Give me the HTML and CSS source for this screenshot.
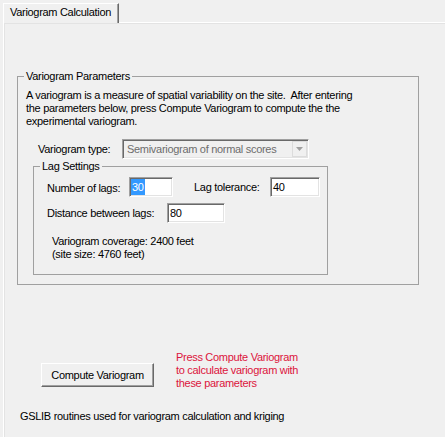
FILE: index.html
```html
<!DOCTYPE html>
<html>
<head>
<meta charset="utf-8">
<link rel="stylesheet" href="styles.css">
</head>
<body>
<div class="tabstrip"><div class="tab">Variogram Calculation</div></div>
<div class="page">
  <fieldset class="group main">
    <legend class="main-legend">Variogram Parameters</legend>
    <p class="desc">A variogram is a measure of spatial variability on the site.&nbsp; After entering<br>the parameters below, press Compute Variogram to compute the the<br>experimental variogram.</p>
    <div class="type-row">
      <span class="type-label">Variogram type:</span>
      <div class="combo">
        <span class="combo-text">Semivariogram of normal scores</span>
        <span class="combo-btn"><svg width="7" height="4" viewBox="0 0 7 4"><path d="M0 0H7L3.5 4Z" fill="#a0a0a0"/></svg></span>
      </div>
    </div>
    <fieldset class="group lag">
      <legend class="lag-legend">Lag Settings</legend>
      <div class="lag-row">
        <span class="l-num">Number of lags:</span>
        <div class="tb tb-num"><span class="sel">30</span></div>
        <span class="l-tol">Lag tolerance:</span>
        <div class="tb tb-tol">40</div>
      </div>
      <div class="lag-row row2">
        <span class="l-dist">Distance between lags:</span>
        <div class="tb tb-dist">80</div>
      </div>
      <p class="coverage">Variogram coverage: 2400 feet<br>(site size: 4760 feet)</p>
    </fieldset>
  </fieldset>
  <div class="actions">
    <button class="compute">Compute Variogram</button>
    <p class="hint">Press Compute Variogram<br>to calculate variogram with<br>these parameters</p>
  </div>
  <p class="footer">GSLIB routines used for variogram calculation and kriging</p>
</div>
</body>
</html>
```
FILE: styles.css
```css
html, body {
  margin: 0;
  padding: 0;
}
body {
  background: #f0f0f0;
  font-family: "Liberation Sans", Arial, sans-serif;
  font-size: 11px;
  line-height: 13px;
  letter-spacing: -0.3px;
  color: #000;
  width: 445px;
  height: 437px;
  overflow: hidden;
}
.tabstrip {
  display: flex;
  padding: 3px 0 0 3px;
  position: relative;
  z-index: 1;
}
.tab {
  width: 116px;
  height: 20px;
  box-sizing: border-box;
  margin-bottom: -1px;
  border-top: 1px solid #fff;
  border-left: 1px solid #fff;
  border-right: 1px solid #696969;
  box-shadow: inset -1px 0 0 #a0a0a0;
  padding: 2px 0 0 6px;
  background: #f0f0f0;
}
.page {
  margin-left: 3px;
  width: 460px;
  min-height: 420px;
  box-sizing: border-box;
  border-top: 1px solid #fff;
  border-left: 1px solid #fff;
  box-shadow: inset 1px 1px 0 #e3e3e3;
  padding-top: 47px;
}
.group {
  border: 1px solid #a0a0a0;
  margin: 0;
  min-width: 0;
}
.group legend {
  padding: 0 2px;
  line-height: 13px;
}
.main {
  margin-left: 13px;
  width: 402px;
  box-sizing: border-box;
  padding: 6px 8px 9px 8px;
}
.main-legend {
  margin-left: -2px;
}
.desc {
  margin: 0;
}
.type-row {
  display: flex;
  align-items: center;
  margin-top: 11px;
}
.type-label {
  margin-left: 12px;
  width: 84px;
}
.combo {
  width: 187px;
  height: 20px;
  box-sizing: border-box;
  display: flex;
  border: 1px solid;
  border-color: #a0a0a0 #fff #fff #a0a0a0;
  box-shadow: inset 1px 1px 0 #696969, inset -1px -1px 0 #e3e3e3;
  padding: 1px;
  color: #6d6d6d;
  background: #f0f0f0;
}
.combo-text {
  flex: 1;
  display: flex;
  align-items: center;
  padding-left: 3px;
}
.combo-btn {
  width: 15px;
  box-sizing: border-box;
  border: 1px solid #dcdcdc;
  display: flex;
  align-items: center;
  justify-content: center;
}
.lag {
  margin: 1px 0 0 7px;
  width: 295px;
  box-sizing: border-box;
  padding: 4px 6px 13px 13px;
}
.lag-legend {
  margin-left: -7px;
}
.lag-row {
  display: flex;
  align-items: center;
}
.row2 {
  margin-top: 6px;
}
.l-num {
  width: 82px;
  padding-top: 2px;
}
.l-tol {
  margin-left: 21px;
  width: 76px;
}
.l-dist {
  width: 120px;
}
.tb {
  height: 20px;
  box-sizing: border-box;
  background: #fff;
  border: 1px solid;
  border-color: #a0a0a0 #fff #fff #a0a0a0;
  box-shadow: inset 1px 1px 0 #696969, inset -1px -1px 0 #e3e3e3;
  padding: 1px 2px;
  display: flex;
  align-items: center;
}
.tb-num {
  width: 44px;
  padding: 1px;
  align-items: stretch;
}
.sel {
  background: #3399ff;
  color: #fff;
  display: flex;
  align-items: center;
  padding: 0 1px;
}
.tb-tol {
  width: 50px;
}
.tb-dist {
  width: 58px;
}
.coverage {
  margin: 12px 0 0 5px;
}
.actions {
  display: flex;
  align-items: flex-start;
  margin-top: 66px;
}
.compute {
  margin: 12px 0 0 37px;
  width: 113px;
  height: 24px;
  box-sizing: border-box;
  font: inherit;
  letter-spacing: inherit;
  color: #000;
  background: #f0f0f0;
  border: 1px solid;
  border-color: #fff #696969 #696969 #fff;
  box-shadow: inset -1px -1px 0 #a0a0a0;
  padding: 0;
}
.hint {
  margin: 0 0 0 22px;
  color: #dc143c;
}
.footer {
  margin: 20px 0 0 16px;
}
```
